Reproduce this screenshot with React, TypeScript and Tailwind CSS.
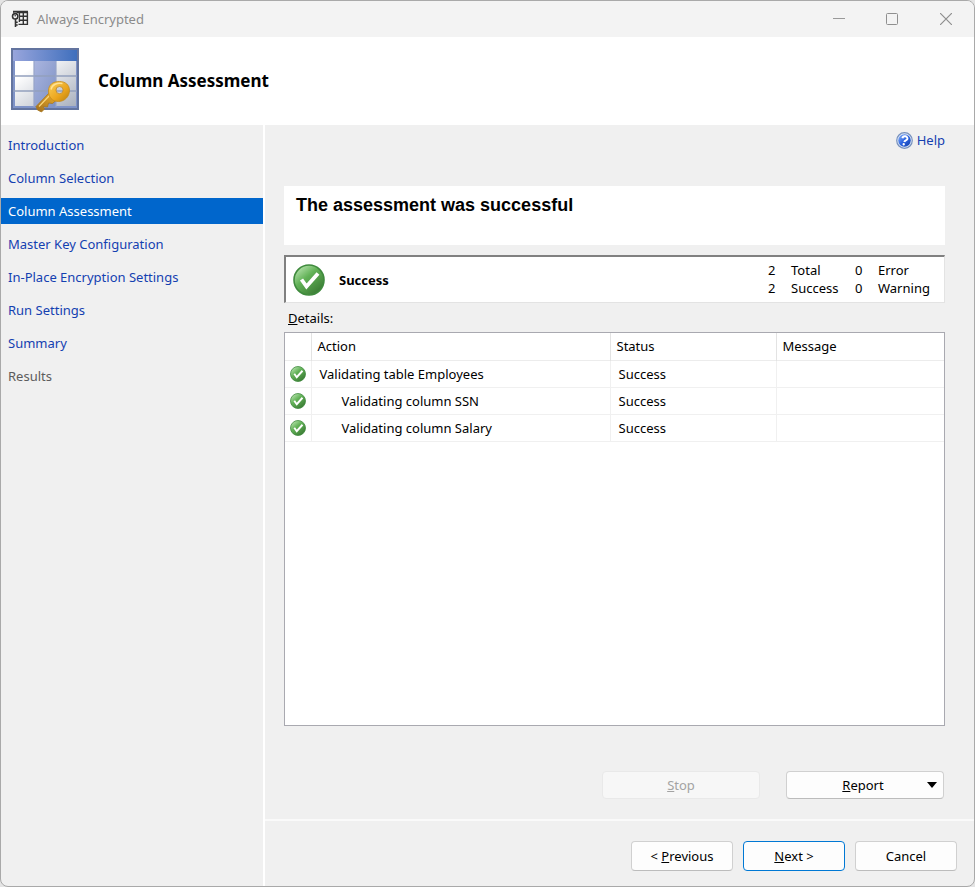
import { useState } from "react";

interface StepProps {
  title: string;
  disabled?: boolean;
}

interface ActionProps {
  name: string;
  status: string;
  message: string;
  nested: boolean;
}

const steps: StepProps[] = [
  { title: "Introduction" },
  { title: "Column Selection" },
  { title: "Column Assessment" },
  { title: "Master Key Configuration" },
  { title: "In-Place Encryption Settings" },
  { title: "Run Settings" },
  { title: "Summary" },
  { title: "Results", disabled: true },
];

const actions: ActionProps[] = [
  { name: "Validating table Employees", status: "Success", message: "", nested: false },
  { name: "Validating column SSN", status: "Success", message: "", nested: true },
  { name: "Validating column Salary", status: "Success", message: "", nested: true },
];

function AppIcon() {
  return (
    <svg className="h-[18px] w-[18px]" viewBox="0 0 18 18" fill="none" stroke="#333">
      <path d="M2 2h15" strokeWidth="2.6" />
      <path d="M16.4 2v12.400H7.500M8.500 6.300h8M8.500 10.300h8M12.300 2v12.400M8.400 3v9" strokeWidth="1.400" />
      <circle cx="4.200" cy="6.300" r="3.800" fill="#f3f3f3" stroke="none" />
      <circle cx="4.200" cy="6.300" r="2.700" strokeWidth="1.600" />
      <circle cx="4.200" cy="5.800" r="0.800" fill="#333" stroke="none" />
      <path d="M4.500 9v8M4.500 12.300h2.200M4.500 15h2.200" strokeWidth="1.600" />
    </svg>
  );
}

function TableKeyIcon() {
  return (
    <svg className="h-[66px] w-[68px]" viewBox="0 0 68 66">
      <defs>
        <linearGradient id="bar" x1="0" x2="1">
          <stop offset="0" stopColor="#98a5dc" />
          <stop offset="1" stopColor="#3f6fbd" />
        </linearGradient>
        <linearGradient id="cells" x1="0" y1="0" x2="1" y2="1">
          <stop offset="0.2" stopColor="#ffffff" />
          <stop offset="1" stopColor="#a9b0be" />
        </linearGradient>
        <linearGradient id="picked" x1="0" y1="0" x2="1" y2="1">
          <stop offset="0" stopColor="#aab5df" />
          <stop offset="1" stopColor="#7d91c4" />
        </linearGradient>
        <linearGradient id="gold" x1="0" y1="0" x2="1" y2="1">
          <stop offset="0" stopColor="#fbd05a" />
          <stop offset="0.6" stopColor="#eba51d" />
          <stop offset="1" stopColor="#b9800f" />
        </linearGradient>
        <linearGradient id="blade" x1="1" y1="0" x2="0" y2="1">
          <stop offset="0" stopColor="#eeb02c" />
          <stop offset="1" stopColor="#a06c1c" />
        </linearGradient>
      </defs>
      <rect x="1" y="1" width="66" height="60" fill="#7f93c8" stroke="#63749f" strokeWidth="2" />
      <rect x="2" y="2" width="64" height="11" fill="url(#bar)" />
      <path d="M4 13h61v45H4z" fill="url(#cells)" />
      <path d="M23 13h22v45H23z" fill="url(#picked)" />
      <path d="M2 28h64M2 43h64" stroke="#93a0bd" strokeWidth="1.600" />
      <path d="M23 13v46M45 13v46" stroke="#97a4c8" strokeWidth="1.200" />
      <path
        d="M38 45L25 58.500l1.500 3.500 4 2 3-3-1.500-2.500 4.500.5 1-4 4 .5 4.500-4z"
        fill="url(#blade)"
        stroke="#a8781f"
        strokeWidth="0.800"
      />
      <path d="M39 47L28 58.500" stroke="#fbd778" strokeWidth="1.200" />
      <path
        d="M37.500 43c0-6.500 4.500-9.500 11-9.500 6 0 10 3.500 10 9s-4.500 11-11 11-10-4.500-10-10.500zM48.500 38.500a3.600 3.600 0 1 0 .1 7.200 3.600 3.600 0 0 0-.1-7.200z"
        fill="url(#gold)"
        fillRule="evenodd"
        stroke="#c58a1c"
        strokeWidth="0.800"
      />
      <path d="M40 41.500c1-5 6-7 11.500-6" stroke="#ffe294" strokeWidth="1.400" fill="none" />
    </svg>
  );
}

function SuccessIcon({ className }: { className: string }) {
  return (
    <svg className={className} viewBox="0 0 32 32" aria-hidden="true">
      <defs>
        <linearGradient id="green" x1="0.15" y1="0.1" x2="0.8" y2="0.9">
          <stop offset="0" stopColor="#b0dfa6" />
          <stop offset="0.4" stopColor="#62b257" />
          <stop offset="1" stopColor="#3c7d35" />
        </linearGradient>
      </defs>
      <circle cx="16" cy="16" r="15" fill="url(#green)" stroke="#3f8a3d" strokeWidth="1.600" />
      <path d="M8.500 15.500l5 7L25 9.500" fill="none" stroke="#fff" strokeWidth="3.800" />
    </svg>
  );
}

function HelpIcon() {
  return (
    <svg className="h-[17px] w-[17px]" viewBox="0 0 17 17" aria-hidden="true">
      <defs>
        <linearGradient id="blue" x1="0" y1="0" x2="1" y2="1">
          <stop offset="0" stopColor="#8db6fa" />
          <stop offset="0.5" stopColor="#2a62e0" />
          <stop offset="1" stopColor="#1440a8" />
        </linearGradient>
      </defs>
      <circle cx="8.500" cy="8.500" r="7.800" fill="#d9e4f5" stroke="#7892be" strokeWidth="1.200" />
      <circle cx="8.500" cy="8.500" r="6.200" fill="url(#blue)" />
      <g transform="rotate(12 8.500 8.500)">
        <path
          d="M6 6.700c0-3.400 5.200-3.200 5-.2-.1 1.700-2.400 1.600-2.400 3.500"
          fill="none"
          stroke="#fff"
          strokeWidth="2"
        />
        <circle cx="8.500" cy="12.300" r="1.200" fill="#fff" />
      </g>
    </svg>
  );
}

function TitleBar() {
  return (
    <header className="flex h-9 items-center bg-[#f3f3f3] pr-px pl-2.5 text-[#8b8b8b]">
      <AppIcon />
      <span className="ml-2 flex-1">Always Encrypted</span>
      <button type="button" aria-label="Minimize" className="flex h-full w-[53px] items-center justify-center">
        <svg className="h-3 w-3" viewBox="0 0 12 12" stroke="#999">
          <path d="M0 5.500h12" />
        </svg>
      </button>
      <button type="button" aria-label="Maximize" className="flex h-full w-[54px] items-center justify-center">
        <svg className="h-3 w-3" viewBox="0 0 12 12" fill="none" stroke="#8f8f8f">
          <rect x="0.500" y="0.500" width="11" height="11" rx="1" />
        </svg>
      </button>
      <button type="button" aria-label="Close" className="flex h-full w-[54px] items-center justify-center">
        <svg className="h-3 w-3" viewBox="0 0 12 12" stroke="#8f8f8f" strokeWidth="1.200">
          <path d="M0 0l12 12M12 0L0 12" />
        </svg>
      </button>
    </header>
  );
}

export default function App() {
  const [current, setCurrent] = useState(2);

  function goPrevious() {
    setCurrent((prev) => Math.max(prev - 1, 0));
  }

  function goNext() {
    setCurrent((prev) => Math.min(prev + 1, steps.length - 2));
  }

  return (
    <div className="min-h-screen bg-[#e4e4e4] font-['Noto_Sans','Open_Sans',sans-serif] text-[13px] leading-[18px] text-black">
      <div className="flex min-h-screen flex-col overflow-hidden rounded-lg border border-[#a9a9a9] bg-[#f0f0f0]">
        <TitleBar />

        <div className="flex h-[88px] items-center gap-[19px] bg-white pl-2.5">
          <TableKeyIcon />
          <h1 className="text-[17px] font-bold">Column Assessment</h1>
        </div>

        <div className="flex flex-1">
          <nav className="flex w-[264px] shrink-0 flex-col gap-[7px] border-r-2 border-white pt-[7px]">
            {steps.map((step, index) => (
              <button
                key={step.title}
                type="button"
                disabled={step.disabled}
                onClick={() => setCurrent(index)}
                className={
                  index === current
                    ? "h-[26px] bg-[#0066cc] px-[7px] text-left text-white"
                    : step.disabled
                      ? "h-[26px] px-[7px] text-left text-[#5c5c5c]"
                      : "h-[26px] px-[7px] text-left text-[#1440b0]"
                }
              >
                {step.title}
              </button>
            ))}
          </nav>

          <div className="flex min-w-0 flex-1 flex-col">
            <main className="flex flex-1 flex-col pr-[29px] pl-[19px]">
              <a href="#help" className="mt-1.5 flex items-center gap-1 self-end text-[#1440b0]">
                <HelpIcon />
                Help
              </a>

              <div className="mt-[37px] h-[59px] bg-white px-3 pt-2.5 font-['Liberation_Sans',Arial,sans-serif] text-lg leading-[18px] font-bold">
                The assessment was successful
              </div>

              <section className="mt-2.5 flex h-12 items-center border-t-2 border-r border-b border-l-2 border-t-[#808080] border-r-[#e3e3e3] border-b-[#e3e3e3] border-l-[#808080] bg-white pr-3 pl-[7px]">
                <SuccessIcon className="h-8 w-8" />
                <span className="ml-3.5 flex-1 font-bold">Success</span>
                <div className="grid grid-cols-[23px_64px_23px_54px] pb-0.5">
                  <span>2</span>
                  <span>Total</span>
                  <span>0</span>
                  <span>Error</span>
                  <span>2</span>
                  <span>Success</span>
                  <span>0</span>
                  <span>Warning</span>
                </div>
              </section>

              <h2 id="details" className="mt-1.5 mb-[5px] pl-1">
                <u>D</u>etails:
              </h2>

              <div className="flex-1 border border-[#a9a9b0] bg-white">
                <table aria-labelledby="details" className="w-full table-fixed border-collapse text-left">
                  <thead>
                    <tr className="h-[27px] border-b border-[#ececec]">
                      <th className="w-[26px] border-r border-[#e3e3e3]" aria-label="Result" />
                      <th className="w-[299px] border-r border-[#e3e3e3] pl-1.5 font-normal">Action</th>
                      <th className="w-[166px] border-r border-[#e3e3e3] pl-1.5 font-normal">Status</th>
                      <th className="pl-1.5 font-normal">Message</th>
                    </tr>
                  </thead>
                  <tbody>
                    {actions.map((action) => (
                      <tr key={action.name} className="h-[27px] border-b border-[#f0f0f0]">
                        <td className="border-r border-[#f0f0f0] pl-[5px]">
                          <SuccessIcon className="h-4 w-4" />
                        </td>
                        <td className={action.nested ? "border-r border-[#f0f0f0] pl-[30px]" : "border-r border-[#f0f0f0] pl-2"}>
                          {action.name}
                        </td>
                        <td className="border-r border-[#f0f0f0] pl-2">{action.status}</td>
                        <td className="pl-2">{action.message}</td>
                      </tr>
                    ))}
                  </tbody>
                </table>
              </div>

              <div className="mt-[45px] mb-5 flex justify-end gap-[26px] pr-px">
                <button
                  type="button"
                  disabled
                  className="h-7 w-[158px] rounded border border-[#e9e9e9] bg-[#f7f7f7] text-[#a3a3a3]"
                >
                  <u>S</u>top
                </button>
                <button
                  type="button"
                  className="flex h-7 w-[158px] items-center rounded border border-[#d0d0d0] border-b-[#bcbcbc] bg-[#fdfdfd] pr-1.5 pl-3"
                >
                  <span className="flex-1">
                    <u>R</u>eport
                  </span>
                  <svg className="h-1.5 w-2.5" viewBox="0 0 10 6">
                    <path d="M0 0h10L5 6z" />
                  </svg>
                </button>
              </div>
            </main>

            <footer className="flex justify-end gap-2.5 border-t-2 border-[#fafafa] pt-5 pr-[17px] pb-[15px]">
              <button
                type="button"
                onClick={goPrevious}
                className="h-[30px] w-[102px] rounded border border-[#d0d0d0] border-b-[#bcbcbc] bg-[#fdfdfd]"
              >
                &lt; <u>P</u>revious
              </button>
              <button
                type="button"
                onClick={goNext}
                className="h-[30px] w-[102px] rounded border border-[#0078d4] bg-[#fdfdfd]"
              >
                <u>N</u>ext &gt;
              </button>
              <button
                type="button"
                className="h-[30px] w-[102px] rounded border border-[#d0d0d0] border-b-[#bcbcbc] bg-[#fdfdfd]"
              >
                Cancel
              </button>
            </footer>
          </div>
        </div>
      </div>
    </div>
  );
}
